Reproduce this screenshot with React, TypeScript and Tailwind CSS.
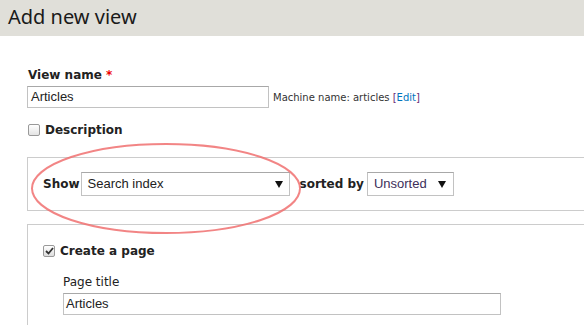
import React from "react";

const font = { fontFamily: '"DejaVu Sans", Verdana, sans-serif' };
const arial = { fontFamily: '"Liberation Sans", Arial, sans-serif' };

function Arrow() {
  return (
    <svg width="8" height="7" viewBox="0 0 8 7">
      <polygon points="0,0 8,0 4,7" fill="#111" />
    </svg>
  );
}

export default function App() {
  return (
    <div className="relative w-[584px] h-[325px] overflow-hidden bg-white text-[#222]" style={font}>
      <div className="h-[36px] bg-[#e0dfd9] pl-[8px] pt-[4px] text-[20px] leading-[26px] text-[#1a1a1a]" style={{ fontFamily: '"Noto Sans", "Open Sans", sans-serif' }}>Add new view</div>

      <div className="pl-[27px] pt-[32px]">
        <div className="text-[12px] font-bold leading-[14px] pl-[1px]">
          View name <span className="text-[#e00]">*</span>
        </div>
        <div className="mt-[4px] flex items-center gap-[4px]">
          <div className="w-[242px] h-[22px] border border-[#c2c2c2] border-t-[#a8a8a8] pl-[3px] text-[13px] leading-[20px]" style={arial}>Articles</div>
          <div className="text-[10px] leading-[14px] text-[#333] pt-[2px]">
            Machine name: articles <span className="text-[#6b2a74]">[</span><span className="text-[#0074bd]">Edit</span><span className="text-[#6b2a74]">]</span>
          </div>
        </div>
        <div className="mt-[15px] flex items-center gap-[5px] pl-[1px]">
          <div className="w-[12px] h-[12px] rounded-[2px] border border-[#999] bg-gradient-to-b from-white to-[#e4e4e4]" />
          <span className="text-[12px] font-bold leading-[14px]">Description</span>
        </div>

        <div className="mt-[20px] h-[54px] border border-r-0 border-[#ccc] flex items-center pl-[15px]">
          <span className="text-[12px] font-bold mr-[1px]">Show</span>
          <div className="w-[209px] h-[24px] border border-[#c2c2c2] border-t-[#a8a8a8] flex items-center justify-between pl-[6px] pr-[6px] text-[13px]" style={arial}>
            <span>Search index</span>
            <Arrow />
          </div>
          <span className="text-[12px] font-bold ml-[10px] mr-[3px]">sorted by</span>
          <div className="w-[87px] h-[24px] border border-[#c2c2c2] border-t-[#a8a8a8] flex items-center justify-between pl-[6px] pr-[7px] text-[13px] text-[#3d2f5a]" style={arial}>
            <span>Unsorted</span>
            <Arrow />
          </div>
        </div>

        <div className="mt-[13px] h-[120px] border border-r-0 border-b-0 border-[#ccc] pl-[15px] pt-[19px]">
          <div className="flex items-center gap-[5px]">
            <div className="w-[12px] h-[12px] rounded-[2px] border border-[#999] bg-gradient-to-b from-white to-[#ddd] flex items-center justify-center">
              <svg width="9" height="8" viewBox="0 0 9 8"><path d="M1 4 L3.5 6.5 L8 1" stroke="#333" strokeWidth="1.8" fill="none" /></svg>
            </div>
            <span className="text-[12px] font-bold leading-[14px]">Create a page</span>
          </div>
          <div className="mt-[17px] pl-[20px] text-[12px] leading-[14px]">Page title</div>
          <div className="mt-[4px] ml-[20px] w-[438px] h-[22px] border border-[#c2c2c2] border-t-[#a8a8a8] pl-[2px] text-[13px] leading-[20px]" style={arial}>Articles</div>
        </div>
      </div>

      <svg className="absolute left-0 top-0 pointer-events-none" width="584" height="325">
        <ellipse cx="166" cy="188.5" rx="134" ry="44.5" fill="none" stroke="#f07070" strokeWidth="2" opacity="0.85" />
      </svg>
    </div>
  );
}
